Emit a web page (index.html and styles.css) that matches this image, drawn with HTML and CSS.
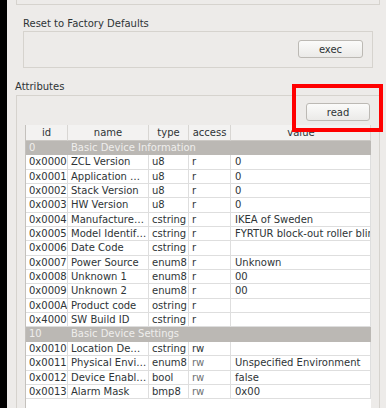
FILE: index.html
```html
<!DOCTYPE html>
<html>
<head>
<meta charset="utf-8">
<link rel="stylesheet" href="styles.css">
</head>
<body>
<div class="app">
  <div class="edge"></div>
  <div class="content">
    <div class="top-frame"></div>
    <section class="reset">
      <div class="group-label reset-label">Reset to Factory Defaults</div>
      <div class="frame reset-frame"><button class="btn">exec</button></div>
    </section>
    <section class="attrs">
      <div class="group-label attrs-label">Attributes</div>
      <div class="frame attrs-frame">
        <div class="toolbar"><button class="btn read-btn">read</button></div>
        <div class="table">
          <div class="row head"><div class="c">id</div><div class="c">name</div><div class="c">type</div><div class="c">access</div><div class="c">value</div></div>
          <div class="row grp"><div class="c">0</div><div class="c span">Basic Device Information</div></div>
          <div class="row"><div class="c">0x0000</div><div class="c">ZCL Version</div><div class="c">u8</div><div class="c">r</div><div class="c">0</div></div>
          <div class="row"><div class="c">0x0001</div><div class="c">Application …</div><div class="c">u8</div><div class="c">r</div><div class="c">0</div></div>
          <div class="row"><div class="c">0x0002</div><div class="c">Stack Version</div><div class="c">u8</div><div class="c">r</div><div class="c">0</div></div>
          <div class="row"><div class="c">0x0003</div><div class="c">HW Version</div><div class="c">u8</div><div class="c">r</div><div class="c">0</div></div>
          <div class="row"><div class="c">0x0004</div><div class="c">Manufacture…</div><div class="c">cstring</div><div class="c">r</div><div class="c">IKEA of Sweden</div></div>
          <div class="row"><div class="c">0x0005</div><div class="c">Model Identif…</div><div class="c">cstring</div><div class="c">r</div><div class="c">FYRTUR block-out roller blind</div></div>
          <div class="row"><div class="c">0x0006</div><div class="c">Date Code</div><div class="c">cstring</div><div class="c">r</div><div class="c"></div></div>
          <div class="row"><div class="c">0x0007</div><div class="c">Power Source</div><div class="c">enum8</div><div class="c">r</div><div class="c">Unknown</div></div>
          <div class="row"><div class="c">0x0008</div><div class="c">Unknown 1</div><div class="c">enum8</div><div class="c">r</div><div class="c">00</div></div>
          <div class="row"><div class="c">0x0009</div><div class="c">Unknown 2</div><div class="c">enum8</div><div class="c">r</div><div class="c">00</div></div>
          <div class="row"><div class="c">0x000A</div><div class="c">Product code</div><div class="c">ostring</div><div class="c">r</div><div class="c"></div></div>
          <div class="row"><div class="c">0x4000</div><div class="c">SW Build ID</div><div class="c">cstring</div><div class="c">r</div><div class="c"></div></div>
          <div class="row grp"><div class="c">10</div><div class="c span">Basic Device Settings</div></div>
          <div class="row"><div class="c">0x0010</div><div class="c">Location De…</div><div class="c">cstring</div><div class="c">rw</div><div class="c"></div></div>
          <div class="row"><div class="c">0x0011</div><div class="c">Physical Envi…</div><div class="c">enum8</div><div class="c dim">rw</div><div class="c">Unspecified Environment</div></div>
          <div class="row"><div class="c">0x0012</div><div class="c">Device Enabl…</div><div class="c">bool</div><div class="c dim">rw</div><div class="c">false</div></div>
          <div class="row"><div class="c">0x0013</div><div class="c">Alarm Mask</div><div class="c">bmp8</div><div class="c dim">rw</div><div class="c">0x00</div></div>
        </div>
      </div>
    </section>
  </div>
  <div class="highlight"></div>
</div>
</body>
</html>
```
FILE: styles.css
```css
html, body {
  margin: 0;
  padding: 0;
}
body {
  background: #edebe9;
  font-family: "DejaVu Sans", sans-serif;
  font-size: 10px;
  color: #2e3436;
}
.app {
  display: flex;
  height: 408px;
  overflow: hidden;
  position: relative;
}
.edge {
  flex: none;
  width: 7px;
  background: #000;
}
.content {
  flex: 1;
  min-width: 0;
}
.top-frame {
  margin-left: 9px;
  width: 364px;
  height: 5px;
  box-sizing: border-box;
  border: 1px solid #d6d3ce;
  border-top: none;
}
.group-label {
  line-height: 12px;
  white-space: nowrap;
}
.reset {
  margin-left: 16px;
}
.reset-label {
  margin-top: 13px;
  margin-bottom: 1px;
}
.frame {
  box-sizing: border-box;
  border: 1px solid #d6d3ce;
}
.reset-frame {
  width: 350px;
  height: 37px;
  display: flex;
  justify-content: flex-end;
  align-items: flex-start;
  padding: 8px 9px 0 0;
}
.btn {
  width: 65px;
  height: 18px;
  padding: 0;
  font: inherit;
  color: #2e3436;
  background: linear-gradient(#fbfbfa, #ebeae8);
  border: 1px solid #bcb9b4;
  border-radius: 3px;
  box-sizing: border-box;
}
.attrs {
  margin-left: 8px;
}
.attrs-label {
  margin-top: 13px;
  margin-bottom: 2px;
}
.attrs-frame {
  margin-left: 1px;
  width: 364px;
  height: 330px;
  padding: 7px 8px 0 8px;
  border-bottom: none;
}
.toolbar {
  display: flex;
  justify-content: flex-end;
  margin-bottom: 4px;
}
.read-btn {
  width: 64px;
  margin-right: 1px;
}
.table {
  border-left: 1px solid #c4c1bd;
  background: #fff;
  height: 300px;
}
.row {
  display: grid;
  grid-template-columns: 42px 81px 40px 42px 140px;
  height: 14.35px;
}
.c {
  box-sizing: border-box;
  padding: 0 3px;
  white-space: nowrap;
  overflow: hidden;
  line-height: 13.35px;
  border-right: 1px solid #dedede;
  border-bottom: 1px solid #dedede;
}
.row .c:nth-child(5) {
  padding-left: 4px;
}
.head {
  height: 16px;
  background: #f3f2f1;
}
.head .c {
  text-align: center;
  line-height: 15px;
  border-right-color: #d8d6d3;
  border-bottom-color: #cbc8c4;
}
.grp {
  background: #bbb8b4;
  color: #efeeec;
}
.grp .c {
  border: none;
}
.grp .span {
  grid-column: 2 / -1;
}
.dim {
  color: #6e7173;
}
.highlight {
  position: absolute;
  left: 292px;
  top: 84px;
  width: 91px;
  height: 48px;
  box-sizing: border-box;
  border: 4px solid #f00;
}
```
